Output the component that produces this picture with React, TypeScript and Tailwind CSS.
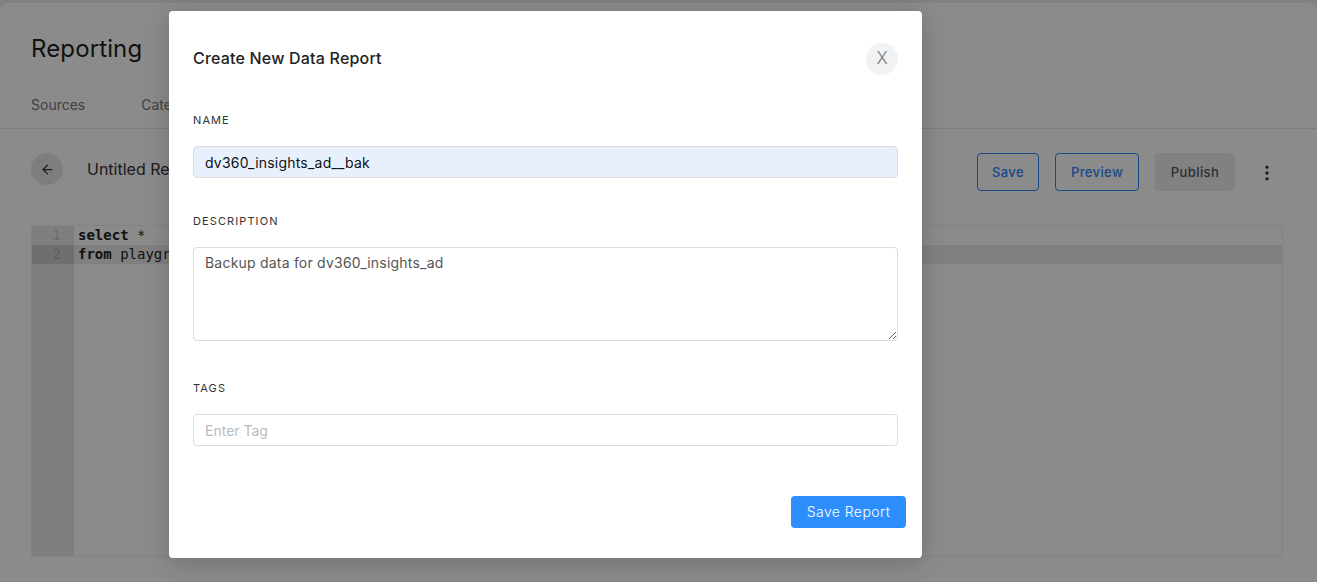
import { ArrowLeft, EllipsisVertical } from "lucide-react";

const SANS = "font-['Inter','Noto_Sans',sans-serif]";
const LABEL = "block text-[11px] leading-[14px] font-normal tracking-[0.1em] uppercase text-[#333]";
const FIELD = "block w-full rounded border border-[#dcdcdc] px-[11px] text-sm tracking-[0.015em] outline-none";

function Background() {
  return (
    <div className="min-h-[582px] bg-[#e9eaf2] pt-[3px]">
      <div className="h-[579px] overflow-hidden rounded-t-lg bg-[#fdfdfd]">
        <header className="h-[126px] border-b border-[#e2e2e2] px-[31px]">
          <h1 className="pt-[29px] text-2xl leading-[34px] tracking-[0.005em] text-[#222]">Reporting</h1>
          <nav className="mt-[30px] flex gap-14 text-sm leading-[18px] text-[#777]">
            <span>Sources</span>
            <span>Categories</span>
          </nav>
        </header>
        <div className="flex items-start px-[31px] pt-6">
          <button className="flex size-8 items-center justify-center rounded-full bg-[#e3e5ea] text-[#333]">
            <ArrowLeft size={15} />
          </button>
          <span className="ml-6 mt-[5px] text-base leading-[22px] text-[#333]">Untitled Report</span>
          <div className="ml-auto mr-[3px] flex items-center gap-4 text-[13px] font-medium tracking-[0.03em]">
            <button className="h-[38px] w-[62px] rounded border border-[#2e86fd] pt-px text-[#2e86fd]">Save</button>
            <button className="h-[38px] w-[84px] rounded border border-[#2e86fd] pt-px text-[#2e86fd]">Preview</button>
            <button className="h-[38px] w-20 rounded bg-[#ececec] pt-px text-[#555]">Publish</button>
            <EllipsisVertical size={20} className="mx-[6px] mt-[2px] text-[#333]" />
          </div>
        </div>
        <div className="ml-[31px] mt-[34px] flex h-[332px] w-[1252px] border border-[#eeeeee] font-['DejaVu_Sans_Mono',monospace] text-sm leading-[19px]">
          <div className="w-[42px] bg-[#e6e6e6] text-right text-[#c4c4c4]">
            <div className="pr-[13px]">1</div>
            <div className="bg-[#cacaca] pr-[13px] text-[#aaa]">2</div>
          </div>
          <div className="flex-1 text-[#222]">
            <div className="pl-1"><b>select</b> *</div>
            <div className="bg-[#e9e9e9] pl-1"><b>from</b> playground</div>
          </div>
        </div>
      </div>
    </div>
  );
}

function ReportModal() {
  return (
    <div className="absolute inset-0 bg-black/45 pt-[11px] pl-[169px]">
      <div className="h-[547px] w-[753px] rounded bg-white px-6 shadow-[0_4px_24px_rgba(0,0,0,0.2)]">
        <div className="flex items-start justify-between pt-[35px]">
          <h2 className="text-base leading-6 font-medium tracking-[0.012em] text-[#222]">Create New Data Report</h2>
          <button className="-mt-[3px] flex size-8 items-center justify-center rounded-full bg-[#f1f2f4] text-[17px] font-light text-[#777]">
            X
          </button>
        </div>
        <label className={`${LABEL} mt-[38px]`}>Name</label>
        <input
          defaultValue="dv360_insights_ad__bak"
          className={`${FIELD} mt-[19px] h-8 bg-[#e8f0fe] text-[#111]`}
        />
        <label className={`${LABEL} mt-[36px]`}>Description</label>
        <textarea
          defaultValue="Backup data for dv360_insights_ad"
          className={`${FIELD} mt-[19px] h-[94px] py-[5px] leading-5 text-[#555]`}
        />
        <label className={`${LABEL} mt-[40px]`}>Tags</label>
        <input
          placeholder="Enter Tag"
          className={`${FIELD} mt-[19px] h-8 tracking-normal placeholder:text-[#bbb]`}
        />
        <div className="-mr-2 mt-[50px] flex justify-end">
          <button className="h-8 w-[115px] rounded bg-[#2d8ffe] text-sm font-light tracking-[0.03em] text-white">Save Report</button>
        </div>
      </div>
    </div>
  );
}

export default function App() {
  return (
    <div className={`relative h-[582px] overflow-hidden ${SANS}`}>
      <Background />
      <ReportModal />
    </div>
  );
}
